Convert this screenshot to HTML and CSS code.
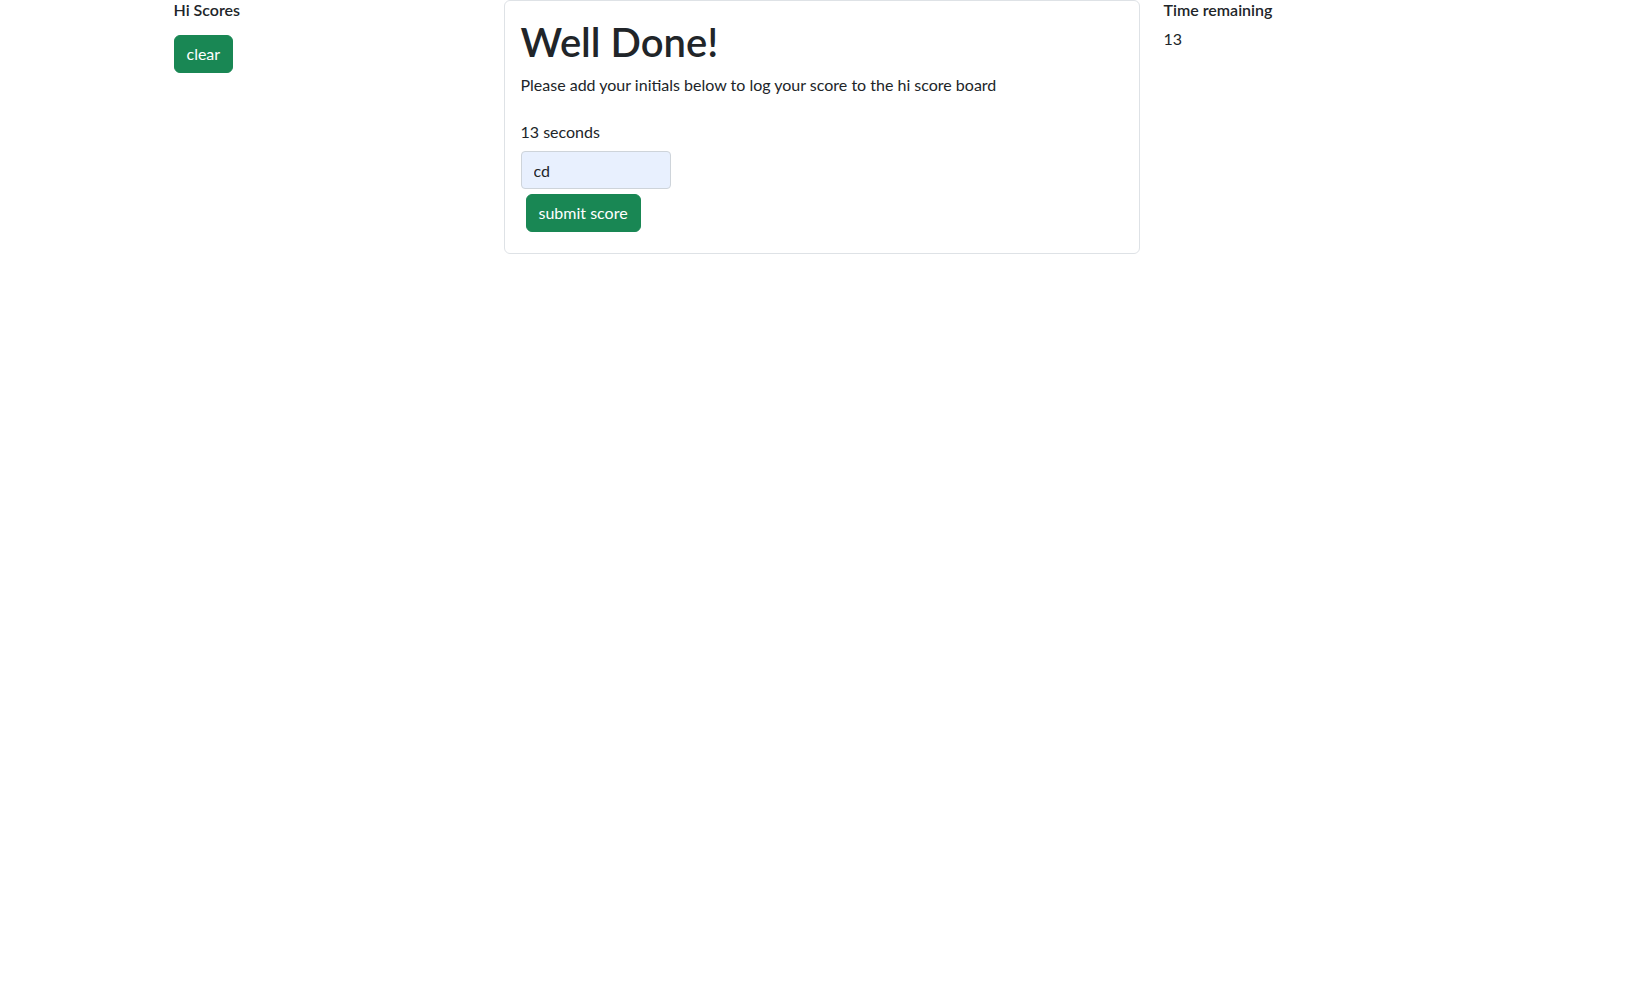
FILE: index.html
```html
<!DOCTYPE html>
<html lang="en">
<head>
<meta charset="utf-8">
<title>Quiz</title>
<link rel="stylesheet" href="styles.css">
</head>
<body>
<div class="container">
  <div class="row">
    <div class="col-side">
      <h6 class="side-title">Hi Scores</h6>
      <button class="btn">clear</button>
    </div>
    <div class="col-main">
      <div class="card">
        <div class="card-body">
          <h1 class="title">Well Done!</h1>
          <p class="lead-text">Please add your initials below to log your score to the hi score board</p>
          <p class="score">13 seconds</p>
          <input class="initials" type="text" value="cd">
          <div><button class="btn btn-submit">submit score</button></div>
        </div>
      </div>
    </div>
    <div class="col-side">
      <h6 class="side-title">Time remaining</h6>
      <p class="time">13</p>
    </div>
  </div>
</div>
</body>
</html>
```
FILE: styles.css
```css
* { box-sizing: border-box; }
body {
  margin: 0;
  font-family: "Lato", "Open Sans", sans-serif;
  font-size: 16px;
  line-height: 1.5;
  color: #212529;
  background: #fff;
}
.container {
  max-width: 1320px;
  margin: 0 auto;
  padding: 0 12px;
}
.row {
  display: flex;
  margin: 0 -12px;
}
.col-side { width: 25%; padding: 0 12px; }
.col-main { width: 50%; padding: 0 12px; }
.side-title {
  margin: 0 0 8px;
  font-size: 16px;
  font-weight: 600;
  line-height: 1.2;
}
.time { margin: 0; }
.btn {
  display: inline-block;
  font-family: inherit;
  font-size: 16px;
  line-height: 1.5;
  padding: 6px 12px;
  border: 1px solid #198754;
  border-radius: 6px;
  background: #198754;
  color: #fff;
  cursor: pointer;
}
.col-side .btn { margin-top: 8px; }
.card {
  border: 1px solid #dee2e6;
  border-radius: 6px;
  background: #fff;
}
.card-body { padding: 17px 16px 16px; }
.title {
  margin: 0 0 7px;
  font-size: 40px;
  font-weight: 600;
  line-height: 1.2;
}
.lead-text { margin: 0 0 23px; }
.score { margin: 0 0 7px; }
.initials {
  display: block;
  width: 150px;
  height: 38px;
  padding: 6px 12px;
  font-family: inherit;
  font-size: 16px;
  color: #212529;
  background: #e8f0fe;
  border: 1px solid #ced4da;
  border-radius: 4px;
}
.btn-submit { margin: 5px; }
```
